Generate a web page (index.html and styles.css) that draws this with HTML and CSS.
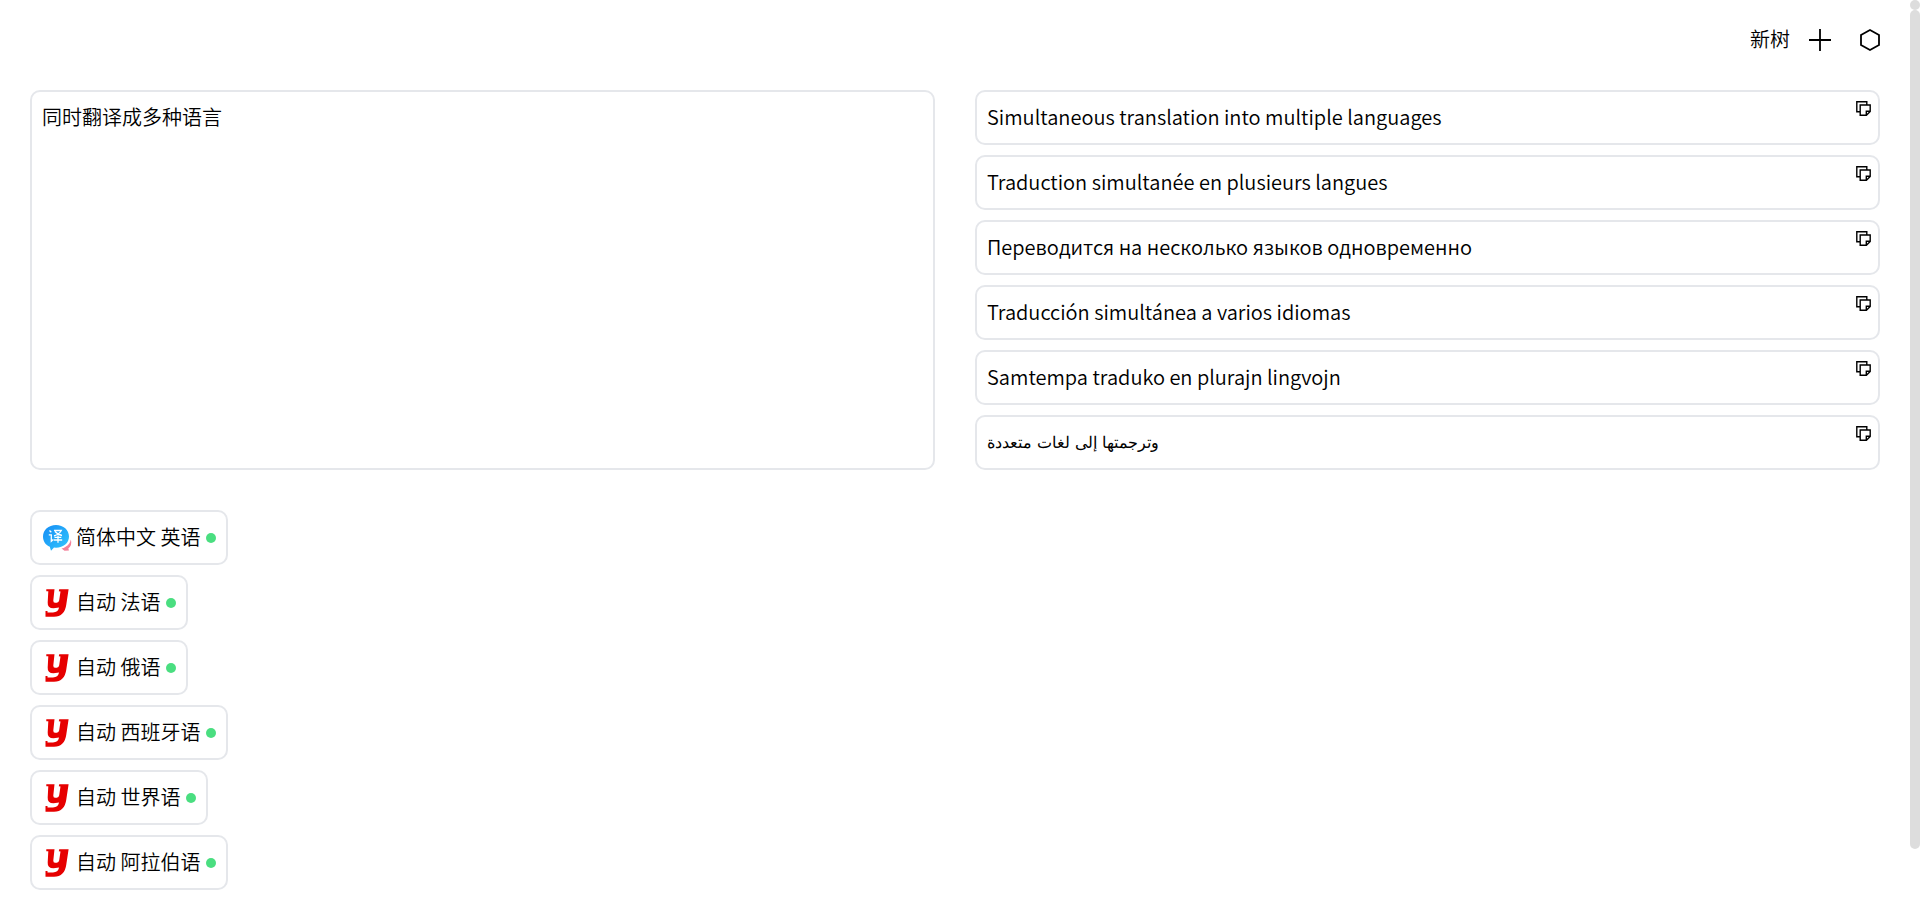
FILE: index.html
```html
<!DOCTYPE html>
<html lang="zh-CN">
<head>
<meta charset="utf-8">
<title>新树</title>
<link rel="stylesheet" href="styles.css">
</head>
<body>
<svg class="symbols" aria-hidden="true">
  <symbol id="copy" viewBox="0 0 15 15"><path d="M3.500 10.800H.8V.8h10v2.700M4.200 4h10v6.400l-3.800 3.800H4.200zM10.300 14v-3.700h3.700" fill="none" stroke="currentColor" stroke-width="1.400"/></symbol>
  <symbol id="youdao" viewBox="0 0 28 30"><path d="M4.300 1.300H12.500L11.300 12.500Q11.200 14.800 13 14.800H14.800Q16.800 14.500 17.200 12.300L18.500 3.600 16.800 3.200 17.200 1.300H26.600L24.300 16.500Q22.700 28.600 12 28.800H3.500V23H5.500V24.500H11Q16 24.400 17.100 19.600L11.500 20.300Q5.300 20.200 5.700 14.500L6.300 3.200H4.300z" fill="#e60000"/></symbol>
</svg>
<div class="app">
  <div class="page">
    <header class="header">
      <span>新树</span>
      <div class="actions">
        <button class="icon-button" aria-label="添加"><svg viewBox="0 0 20 22"><path d="M10 0v22M-1 11h22" stroke="#000" stroke-width="1.800"/></svg></button>
        <button class="icon-button" aria-label="设置"><svg viewBox="0 0 20 22"><path d="M10 1l9 5v10l-9 5-9-5V6z" fill="none" stroke="#000" stroke-width="1.800"/></svg></button>
      </div>
    </header>
    <main>
      <div class="panels">
        <textarea class="box source" aria-label="原文">同时翻译成多种语言</textarea>
        <div class="results">
          <div class="box result"><span>Simultaneous translation into multiple languages</span><button class="copy" aria-label="复制"><svg><use href="#copy"/></svg></button></div>
          <div class="box result"><span>Traduction simultanée en plusieurs langues</span><button class="copy" aria-label="复制"><svg><use href="#copy"/></svg></button></div>
          <div class="box result"><span>Переводится на несколько языков одновременно</span><button class="copy" aria-label="复制"><svg><use href="#copy"/></svg></button></div>
          <div class="box result"><span>Traducción simultánea a varios idiomas</span><button class="copy" aria-label="复制"><svg><use href="#copy"/></svg></button></div>
          <div class="box result"><span>Samtempa traduko en plurajn lingvojn</span><button class="copy" aria-label="复制"><svg><use href="#copy"/></svg></button></div>
          <div class="box result"><span class="arabic" lang="ar">وترجمتها إلى لغات متعددة</span><button class="copy" aria-label="复制"><svg><use href="#copy"/></svg></button></div>
        </div>
      </div>
      <div class="tree">
        <div class="box node">
          <svg class="logo" viewBox="0 0 28 30" aria-hidden="true">
            <defs><linearGradient id="sky" x1="0" y1="0" x2="1" y2="1"><stop offset="0" stop-color="#148cf5"/><stop offset="1" stop-color="#35c8fd"/></linearGradient></defs>
            <path d="M28.800 16.500Q28 21 24 23.500 21.500 25.500 19.500 25.500L22.500 27.800 27 27.500 26.300 25.500Q30.500 22 28.800 16.500z" fill="#f5829b"/>
            <path d="M14 2C21.500 2 27 7 27 13.500S21.500 24.700 14 24.700L12 24.500 9 27.800 7.800 23.800C3.500 22 1 18 1 13.500 1 7 6.500 2 14 2z" fill="url(#sky)"/>
            <path d="M7.500 7.500l1.800 1.800M6.800 11.800h2.500v6.500l2-1.700M12 7.500h7.300Q17 11.500 12 12.800M13 8.500Q15.500 11.500 20 12.500M12.500 14.300h6.800M11.800 17h8.400M16 12.500v7.300" fill="none" stroke="#fff" stroke-width="1.300"/>
          </svg>
          <span>简体中文 英语</span><i class="dot"></i>
        </div>
        <div class="box node"><svg class="logo"><use href="#youdao"/></svg><span>自动 法语</span><i class="dot"></i></div>
        <div class="box node"><svg class="logo"><use href="#youdao"/></svg><span>自动 俄语</span><i class="dot"></i></div>
        <div class="box node"><svg class="logo"><use href="#youdao"/></svg><span>自动 西班牙语</span><i class="dot"></i></div>
        <div class="box node"><svg class="logo"><use href="#youdao"/></svg><span>自动 世界语</span><i class="dot"></i></div>
        <div class="box node"><svg class="logo"><use href="#youdao"/></svg><span>自动 阿拉伯语</span><i class="dot"></i></div>
      </div>
    </main>
  </div>
  <div class="scrollbar" aria-hidden="true"><i class="scroll-cap"></i><i class="scroll-thumb"></i></div>
</div>
</body>
</html>
```

FILE: styles.css
```css
* { box-sizing: border-box; }

body {
  margin: 0;
  background: #fff;
  color: #000;
  font: 20px/30px "Noto Sans CJK SC", sans-serif;
  font-weight: 350;
}

button {
  padding: 0;
  border: 0;
  background: none;
  color: inherit;
  cursor: pointer;
}

svg {
  display: block;
  overflow: visible;
}

.symbols {
  position: absolute;
  width: 0;
  height: 0;
}

.app { display: flex; }

.page {
  flex: 1;
  min-width: 0;
  padding: 0 30px;
}

.header {
  display: flex;
  justify-content: flex-end;
  align-items: center;
  gap: 20px;
  height: 80px;
}

.header span { padding-bottom: 2px; }

.actions {
  display: flex;
  gap: 30px;
}

.icon-button svg {
  width: 20px;
  height: 22px;
}

.box {
  border: 2px solid #e5e7eb;
  border-radius: 10px;
  padding: 10px;
}

.panels {
  display: grid;
  grid-template-columns: 1fr 1fr;
  gap: 40px;
  padding-top: 10px;
}

.source {
  display: block;
  width: 100%;
  height: 100%;
  background: none;
  color: inherit;
  font: inherit;
  resize: none;
  outline: none;
}

.results,
.tree {
  display: flex;
  flex-direction: column;
  gap: 10px;
}

.result {
  position: relative;
  min-height: 55px;
  line-height: 29px;
}

.result span { display: block; }

.result .arabic {
  font-family: "DejaVu Sans", sans-serif;
  font-size: 16px;
  line-height: 31px;
}

.copy {
  position: absolute;
  top: 9px;
  right: 7px;
}

.copy svg {
  width: 15px;
  height: 15px;
}

.tree {
  align-items: flex-start;
  padding-top: 40px;
}

.node {
  display: flex;
  align-items: center;
  gap: 6px;
  min-height: 55px;
}

.node span { padding-bottom: 1px; }

.logo {
  width: 28px;
  height: 30px;
}

.dot {
  width: 10px;
  height: 10px;
  border-radius: 50%;
  background: #4ade80;
}

.scrollbar {
  display: flex;
  flex-direction: column;
  width: 10px;
  height: 100vh;
}

.scroll-cap,
.scroll-thumb {
  border-radius: 5px;
  background: #ddd;
}

.scroll-cap { height: 10px; }

.scroll-thumb { height: 92.4%; }
```
